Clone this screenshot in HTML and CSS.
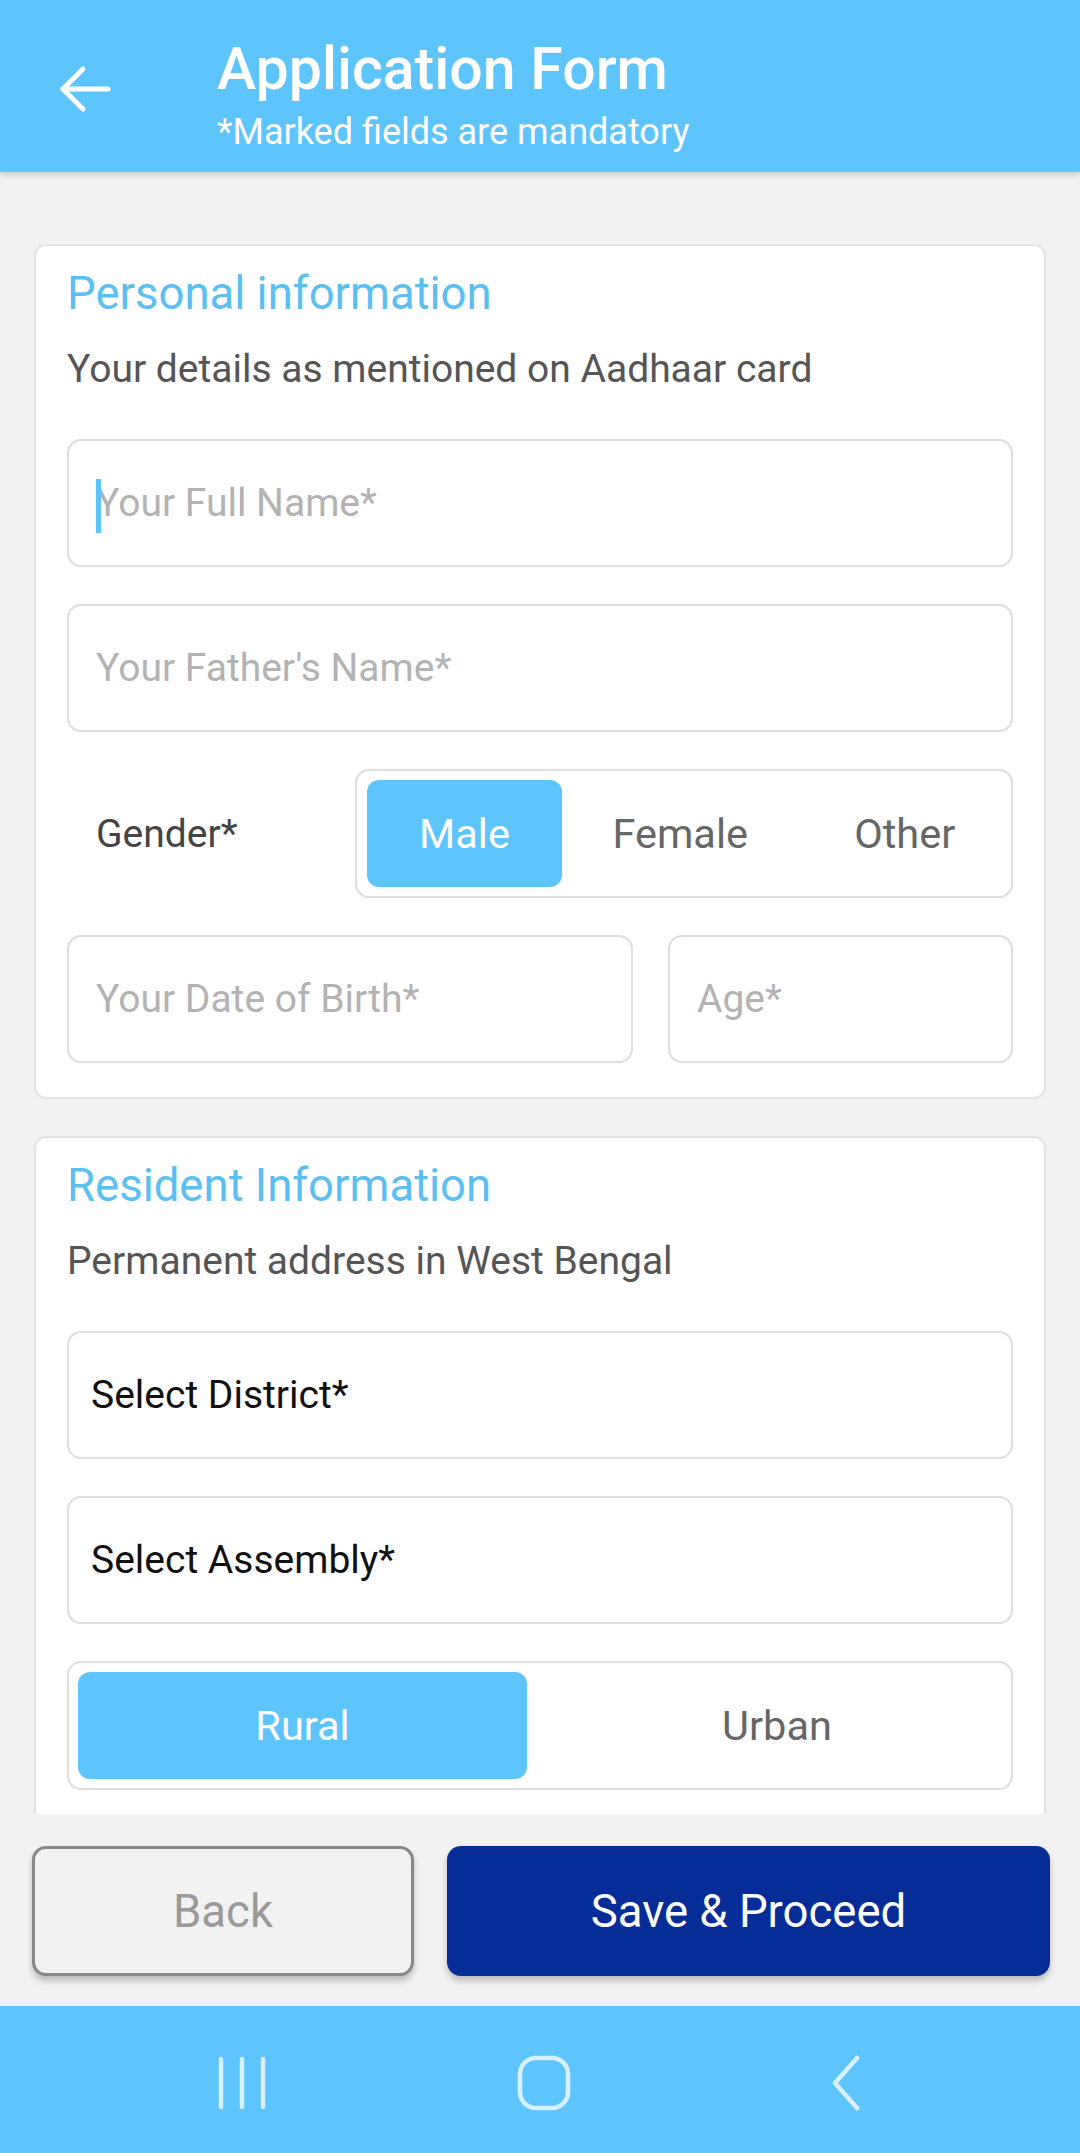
FILE: index.html
```html
<!DOCTYPE html>
<html lang="en">
<head>
<meta charset="utf-8">
<title>Application Form</title>
<link rel="stylesheet" href="styles.css">
</head>
<body>
<header class="appbar">
  <div class="appbar-back">
    <svg class="back-arrow" width="52" height="48" viewBox="0 0 52 48" fill="none" stroke="#ffffff" stroke-width="5" stroke-linecap="round" stroke-linejoin="round">
      <path d="M49 24H4"/>
      <path d="M24 4L4 24L24 44"/>
    </svg>
  </div>
  <div class="appbar-titles">
    <div class="appbar-title">Application Form</div>
    <div class="appbar-sub">*Marked fields are mandatory</div>
  </div>
</header>

<main class="scroll">
  <section class="card">
    <h2 class="card-title">Personal information</h2>
    <p class="card-desc">Your details as mentioned on Aadhaar card</p>
    <div class="fields">
      <div class="field"><span class="cursor"></span><span class="placeholder">Your Full Name*</span></div>
      <div class="field"><span class="placeholder">Your Father's Name*</span></div>
      <div class="gender-row">
        <span class="gender-label">Gender*</span>
        <div class="segment segment-3">
          <span class="seg-item active">Male</span>
          <span class="seg-item">Female</span>
          <span class="seg-item">Other</span>
        </div>
      </div>
      <div class="dob-row">
        <div class="field"><span class="placeholder">Your Date of Birth*</span></div>
        <div class="field"><span class="placeholder">Age*</span></div>
      </div>
    </div>
  </section>

  <section class="card">
    <h2 class="card-title">Resident Information</h2>
    <p class="card-desc">Permanent address in West Bengal</p>
    <div class="fields">
      <div class="field select"><span class="select-text">Select District*</span></div>
      <div class="field select"><span class="select-text">Select Assembly*</span></div>
      <div class="segment segment-2">
        <span class="seg-item active">Rural</span>
        <span class="seg-item seg-urban">Urban</span>
      </div>
    </div>
  </section>
</main>

<div class="actions">
  <button class="btn btn-back">Back</button>
  <button class="btn btn-save">Save &amp; Proceed</button>
</div>

<nav class="sysnav">
  <div class="nav-slot">
    <svg width="50" height="54" viewBox="0 0 50 54" fill="none" stroke="#d6f0ff" stroke-width="4.5" stroke-linecap="round">
      <path d="M4 3V51"/>
      <path d="M25 3V51"/>
      <path d="M46 3V51"/>
    </svg>
  </div>
  <div class="nav-slot">
    <svg width="54" height="56" viewBox="0 0 54 56" fill="none" stroke="#d6f0ff" stroke-width="4.5">
      <rect x="3" y="3" width="48" height="50" rx="16" ry="16"/>
    </svg>
  </div>
  <div class="nav-slot">
    <svg width="30" height="56" viewBox="0 0 30 56" fill="none" stroke="#d6f0ff" stroke-width="4.5" stroke-linecap="round" stroke-linejoin="round">
      <path d="M26 3L4 28L26 53"/>
    </svg>
  </div>
</nav>
</body>
</html>
```

FILE: styles.css
```css
* { box-sizing: border-box; }

html, body {
  margin: 0;
  padding: 0;
}

body {
  width: 1080px;
  height: 2153px;
  overflow: hidden;
  display: flex;
  flex-direction: column;
  background: #f2f2f2;
  font-family: Roboto, "Noto Sans", "Liberation Sans", sans-serif;
  color: #444;
}

/* App bar */
.appbar {
  position: relative;
  z-index: 2;
  flex: 0 0 172px;
  height: 172px;
  background: #5ec4fc;
  display: flex;
  align-items: flex-start;
  box-shadow: 0 3px 6px rgba(0, 0, 0, 0.16);
}

.appbar-back {
  width: 217px;
  padding-left: 59px;
  padding-top: 65px;
}

.back-arrow { display: block; }

.appbar-titles {
  padding-top: 34px;
  color: #ffffff;
}

.appbar-title {
  font-size: 59px;
  font-weight: 500;
  line-height: 70px;
}

.appbar-sub {
  font-size: 36px;
  line-height: 44px;
  margin-top: 6px;
}

/* Scroll area */
.scroll {
  flex: 0 0 1642px;
  height: 1642px;
  overflow: hidden;
  padding: 72px 34px 0;
  display: flex;
  flex-direction: column;
  gap: 37px;
}

.card {
  flex: 0 0 auto;
  background: #ffffff;
  border: 2px solid #e4e4e4;
  border-radius: 12px;
  padding: 20px 31px 34px;
}

.card-title {
  margin: 0;
  font-size: 45.5px;
  font-weight: 400;
  line-height: 56px;
  color: #5cbff2;
}

.card-desc {
  margin: 23px 0 0;
  font-size: 39px;
  line-height: 48px;
  color: #555555;
}

.fields {
  margin-top: 46px;
  display: flex;
  flex-direction: column;
  gap: 37px;
}

.field {
  position: relative;
  height: 128px;
  border: 2px solid #dedede;
  border-radius: 14px;
  display: flex;
  align-items: center;
  padding: 0 27px;
}

.placeholder {
  font-size: 39px;
  color: #b3b3b3;
}

.cursor {
  position: absolute;
  left: 27px;
  top: 38px;
  width: 5px;
  height: 54px;
  background: #5ec4fc;
}

.field.select {
  padding: 0 22px;
}

.select-text {
  font-size: 39px;
  color: #111111;
}

/* Gender row */
.gender-row {
  height: 129px;
  display: grid;
  grid-template-columns: 1fr 658px;
  align-items: center;
}

.gender-label {
  padding-left: 29px;
  font-size: 39px;
  color: #444444;
}

.segment {
  height: 129px;
  border: 2px solid #dedede;
  border-radius: 14px;
  display: grid;
  align-items: stretch;
  padding: 9px 0 9px 10px;
}

.segment-3 {
  grid-template-columns: 195px 1fr 1fr;
  column-gap: 12px;
}

.segment-2 {
  grid-template-columns: 449px 1fr;
  column-gap: 0;
  padding: 9px 10px 9px 9px;
}

.seg-item {
  display: flex;
  align-items: center;
  justify-content: center;
  font-size: 41.5px;
  color: #666666;
  border-radius: 12px;
}

.seg-item.active {
  background: #5ec4fc;
  color: #ffffff;
}

.seg-urban {
  padding-left: 26px;
}

.dob-row {
  display: grid;
  grid-template-columns: 566px 1fr;
  column-gap: 35px;
}

/* Action buttons */
.actions {
  flex: 0 0 192px;
  height: 192px;
  display: flex;
  gap: 33px;
  padding: 32px 30px 0 32px;
  align-items: flex-start;
}

.btn {
  height: 130px;
  border-radius: 14px;
  font-family: Roboto, "Noto Sans", "Liberation Sans", sans-serif;
  font-size: 45.5px;
  cursor: pointer;
}

.btn-back {
  width: 382px;
  background: #f2f2f2;
  color: #9a9a9a;
  border: 3.5px solid #888888;
  box-shadow: 0 5px 6px rgba(0, 0, 0, 0.22);
}

.btn-save {
  flex: 1;
  background: #062c98;
  color: #ffffff;
  border: none;
  box-shadow: 0 5px 6px rgba(0, 0, 0, 0.22);
}

/* System navigation */
.sysnav {
  flex: 0 0 147px;
  height: 147px;
  background: #5ec4fc;
  display: flex;
  justify-content: center;
  align-items: center;
  gap: 202px;
  padding: 7px 0 0 8px;
}

.nav-slot {
  width: 100px;
  display: flex;
  justify-content: center;
  align-items: center;
}

.nav-slot svg { display: block; }
```
